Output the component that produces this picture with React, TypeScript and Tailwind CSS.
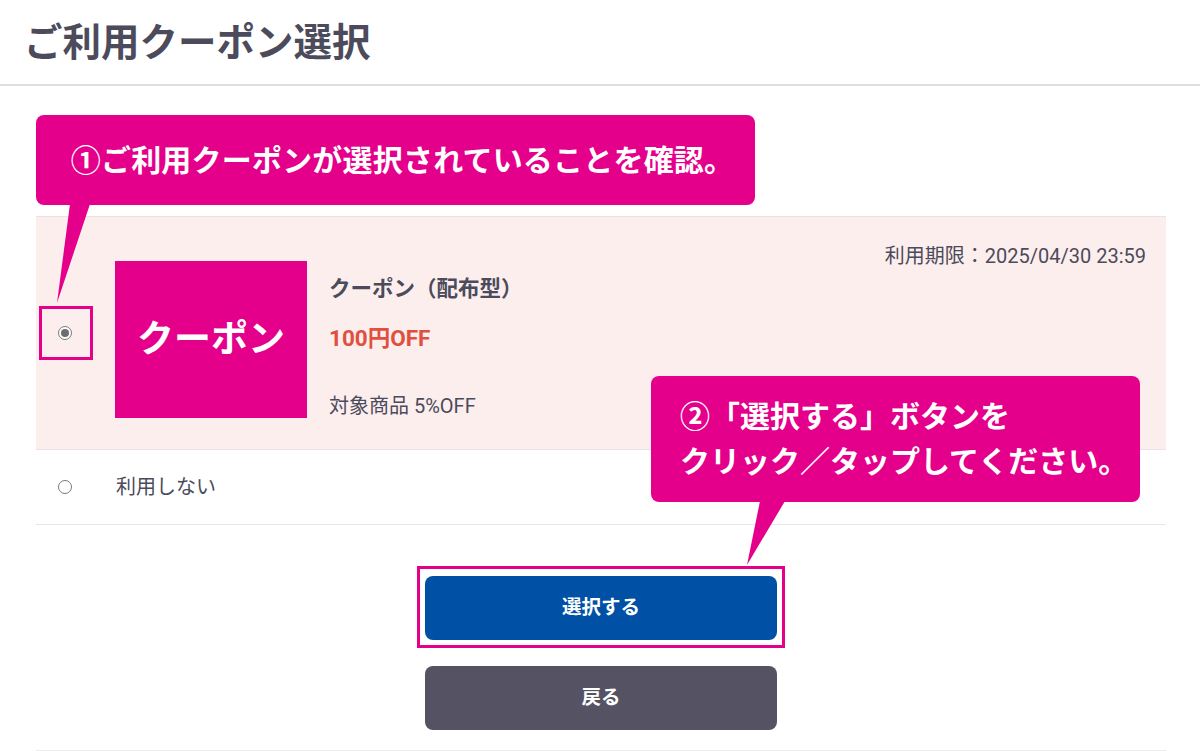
import React from "react";

function Radio({ checked }: { checked?: boolean }) {
  return (
    <span className="flex h-[14px] w-[14px] items-center justify-center rounded-full border-[1.5px] border-[#7a7a7a] bg-white">
      {checked && <span className="h-[8px] w-[8px] rounded-full bg-[#6e6e6e]" />}
    </span>
  );
}

export default function App() {
  return (
    <div className="relative min-h-[751px] w-[1200px] bg-white font-[Roboto,'Noto_Sans_CJK_JP',sans-serif] text-[#4b4b5b]">
      <header className="flex h-[86px] items-center border-b-2 border-[#dedede] pl-[24px] pt-[2px]">
        <h1 className="text-[38.5px] font-bold text-[#4b4b5b]">ご利用クーポン選択</h1>
      </header>

      <main className="ml-[36px] mr-[34px] mt-[130px] border-b border-[#ececec] pb-[20px]">
        {/* coupon row */}
        <div className="flex border-y border-[#ebe3e3] bg-[#fdeeee] pb-[31px] pr-[20px] pt-[27px]">
          <div className="flex w-[79px] items-center pl-[22px] pt-[4px]">
            <div className="relative">
              <Radio checked />
              <span className="absolute -left-[19px] -top-[20px] h-[54px] w-[54px] border-[3px] border-[#e5008a]" />
            </div>
          </div>
          <div className="mt-[17px] flex h-[157px] w-[192px] items-center justify-center bg-[#e4008b]">
            <span className="text-[37px] font-bold text-white">クーポン</span>
          </div>
          <div className="ml-[22px] mt-[17px] flex flex-1 flex-col pt-[14px]">
            <p className="text-[21.5px] font-bold leading-[28px]">クーポン（配布型）</p>
            <p className="mt-[21px] text-[22.5px] font-bold leading-[28px] text-[#e0503f]">100円OFF</p>
            <p className="mt-auto text-[20px] leading-[24px]">対象商品 5%OFF</p>
          </div>
          <p className="self-start text-[20px] leading-[24px]">利用期限：2025/04/30 23:59</p>
        </div>

        {/* no coupon row */}
        <div className="flex h-[75px] items-center border-b border-[#e6e6e6]">
          <div className="w-[80px] pl-[22px]">
            <Radio />
          </div>
          <p className="text-[20px]">利用しない</p>
        </div>

        <div className="mt-[51px] flex flex-col items-center gap-[26px]">
          <div className="relative">
            <button className="flex h-[64px] w-[352px] items-center justify-center rounded-[8px] bg-[#0050a5] text-[19.5px] font-bold text-white">
              選択する
            </button>
            <span className="absolute -bottom-[8px] -left-[8px] -right-[8px] -top-[10px] border-[3px] border-[#e5008a]" />
          </div>
          <button className="flex h-[64px] w-[352px] items-center justify-center rounded-[8px] bg-[#545263] text-[19.5px] font-bold text-white">
            戻る
          </button>
        </div>
      </main>

      {/* callout 1 */}
      <div className="absolute left-[36px] top-[115px] flex h-[90px] w-[719px] items-center justify-center rounded-[8px] bg-[#e4008b] pl-[14px]">
        <p className="text-[30px] font-bold tracking-[0.2px] text-white">①ご利用クーポンが選択されていることを確認。</p>
        <svg className="absolute left-0 top-[89px]" width="60" height="100" viewBox="0 0 60 100">
          <polygon points="34,0 54,0 21,99" fill="#e4008b" />
        </svg>
      </div>

      {/* callout 2 */}
      <div className="absolute left-[651px] top-[376px] h-[126px] w-[489px] rounded-[8px] bg-[#e4008b] pl-[29px] pt-[18px]">
        <p className="text-[30px] font-bold leading-[45px] text-white">
          ②「選択する」ボタンを
          <br />
          クリック／タップしてください。
        </p>
        <svg className="absolute left-0 top-[125px]" width="140" height="65" viewBox="0 0 140 65">
          <polygon points="109,0 134,0 96,64" fill="#e4008b" />
        </svg>
      </div>
    </div>
  );
}
